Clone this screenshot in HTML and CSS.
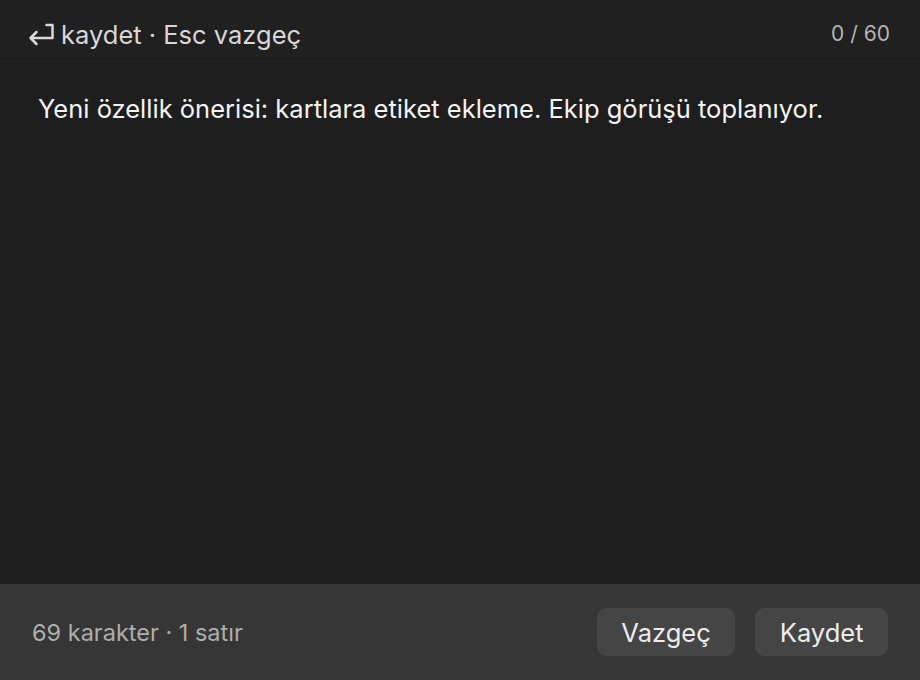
FILE: index.html
```html
<!DOCTYPE html>
<html lang="tr">
<head>
<meta charset="utf-8">
<link rel="stylesheet" href="styles.css">
</head>
<body>
<div class="editor">
  <header class="bar">
    <div class="hint">
      <svg class="enter" viewBox="0 0 27 24" width="27" height="24" aria-hidden="true">
        <path d="M18.5 3 H24.5 V16 H2.5 M8.5 10 L2.5 16 L8.5 22" fill="none" stroke="currentColor" stroke-width="2.5" stroke-linecap="round" stroke-linejoin="round"/>
      </svg>
      <span>kaydet · Esc vazgeç</span>
    </div>
    <div class="count">0 / 60</div>
  </header>
  <main class="body">
    <p class="text">Yeni özellik önerisi: kartlara etiket ekleme. Ekip görüşü toplanıyor.</p>
  </main>
  <footer class="foot">
    <div class="stats">69 karakter · 1 satır</div>
    <div class="actions">
      <button class="btn">Vazgeç</button>
      <button class="btn">Kaydet</button>
    </div>
  </footer>
</div>
</body>
</html>
```
FILE: styles.css
```css
html, body {
  margin: 0;
  padding: 0;
  background: #1e1e1e;
}
body {
  font-family: Inter, "Noto Sans", "Liberation Sans", sans-serif;
}
.editor {
  width: 920px;
  height: 680px;
  display: flex;
  flex-direction: column;
  background: #1e1e1e;
}
.bar {
  height: 58px;
  flex: none;
  display: flex;
  align-items: flex-start;
  justify-content: space-between;
  padding: 0 30px 0 28px;
  background: #202020;
  border-bottom: 1px solid #1b1b1b;
}
.hint {
  display: flex;
  align-items: center;
  gap: 6px;
  color: #d8d8d8;
  font-size: 25.5px;
  line-height: 31px;
  margin-top: 19px;
}
.enter {
  color: #d8d8d8;
  margin-top: -2px;
}
.count {
  color: #b4b4b4;
  font-size: 21px;
  line-height: 26px;
  margin-top: 21px;
}
.body {
  flex: 1;
  padding: 0 38px;
}
.text {
  margin: 34px 0 0;
  color: #f4f4f4;
  font-size: 25.5px;
  line-height: 31px;
}
.foot {
  height: 96px;
  flex: none;
  display: flex;
  align-items: center;
  justify-content: space-between;
  padding: 0 32px;
  background: #363636;
}
.stats {
  color: #aeaeae;
  font-size: 23.5px;
}
.actions {
  display: flex;
  gap: 20px;
}
.btn {
  height: 48px;
  padding: 0 24.5px;
  border: none;
  border-radius: 9px;
  background: #454545;
  color: #ececec;
  font-family: inherit;
  font-size: 25.5px;
}
```
